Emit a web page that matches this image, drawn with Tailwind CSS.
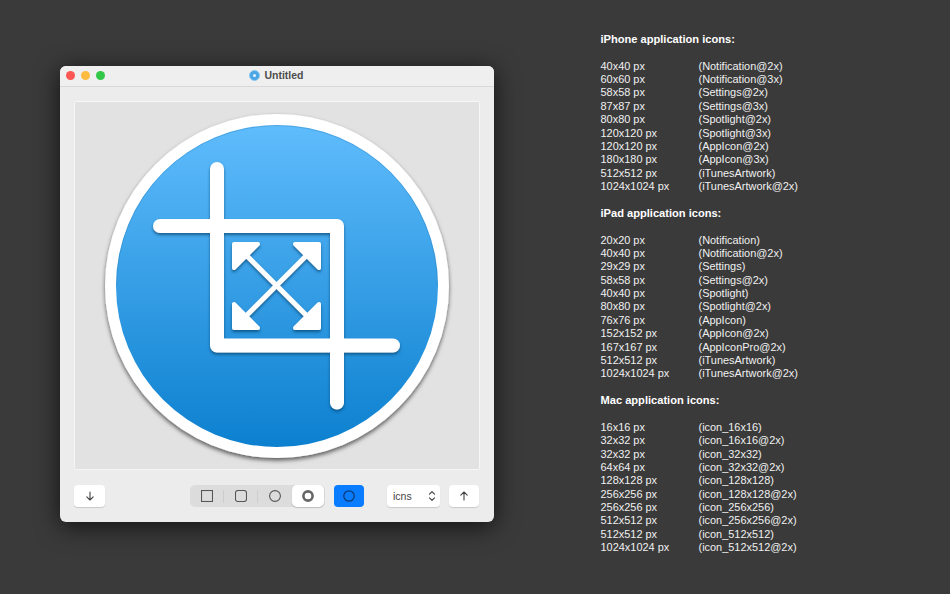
<!DOCTYPE html>
<html lang="en">
  <head>
    <meta charset="UTF-8" />
    <title>Icon sizes</title>
    <script src="https://cdn.jsdelivr.net/npm/@tailwindcss/browser@4"></script>
  </head>
  <body class="w-[950px] h-[594px] overflow-hidden bg-[#3a3a3a] font-['Liberation_Sans',sans-serif]">
    <div class="flex items-start h-full">
      <!-- Window -->
      <div class="ml-[60px] mt-[66px] w-[434px] h-[456px] shrink-0 flex flex-col rounded-[6px] bg-[#ececec] shadow-[0_4px_24px_rgba(0,0,0,0.7)]">
        <!-- Title bar -->
        <div class="relative h-[21px] pb-[1px] shrink-0 flex items-center justify-center rounded-t-[6px] bg-[#efefef] border-b border-[#d9d9d9]">
          <div class="absolute left-[6px] top-[5px] flex gap-[6px]">
            <span class="w-[9px] h-[9px] rounded-full bg-[#fc5753]"></span>
            <span class="w-[9px] h-[9px] rounded-full bg-[#fdbc40]"></span>
            <span class="w-[9px] h-[9px] rounded-full bg-[#33c748]"></span>
          </div>
          <div class="flex items-center gap-[4px] ml-[-1px]">
            <span class="w-[11px] h-[11px] rounded-full bg-[#4ba6e6] border-[1px] border-[#8cc6ee] flex items-center justify-center">
              <span class="w-[3px] h-[3px] rounded-full bg-[#e8f4fc]"></span>
            </span>
            <span class="text-[10.5px] font-bold leading-none text-[#4d4d4d]">Untitled</span>
          </div>
        </div>

        <!-- Icon well -->
        <div class="mt-[14px] mx-[14px] h-[369px] shrink-0 rounded-[2px] bg-[#e2e2e2] border border-[#f6f6f6]">
          <svg class="block -m-px" width="406" height="369" viewBox="74 101 406 369">
            <defs>
              <linearGradient id="disc" x1="0" y1="0" x2="0" y2="1">
                <stop offset="0" stop-color="#5fbcfc" />
                <stop offset="1" stop-color="#0c80cf" />
              </linearGradient>
              <filter id="outer" x="-10%" y="-10%" width="120%" height="120%">
                <feDropShadow dx="0" dy="2.5" stdDeviation="2.2" flood-color="#000" flood-opacity="0.6" />
              </filter>
              <filter id="mark" x="-10%" y="-10%" width="120%" height="120%">
                <feDropShadow dx="0" dy="2" stdDeviation="1.8" flood-color="#06375f" flood-opacity="0.65" />
              </filter>
            </defs>
            <circle cx="277" cy="286" r="172" fill="#fff" filter="url(#outer)" />
            <circle cx="277" cy="286" r="161" fill="url(#disc)" />
            <path d="M116.5 286A160.5 160.5 0 0 1 437.5 286" fill="none" stroke="#1d6fa8" stroke-opacity="0.3" stroke-width="1" />
            <g filter="url(#mark)" fill="#fff">
              <g fill="none" stroke="#fff" stroke-width="14" stroke-linecap="round" stroke-linejoin="round">
                <path d="M217 169V345.5H393" />
                <path d="M160 226H337V402.5" />
              </g>
              <g fill="none" stroke="#fff" stroke-width="5">
                <path d="M240 249L313 322" />
                <path d="M313 249L240 322" />
              </g>
              <g stroke="#fff" stroke-width="4" stroke-linejoin="round">
                <path d="M234 244H258L234 268Z" />
                <path d="M319 244H295L319 268Z" />
                <path d="M234 328H258L234 304Z" />
                <path d="M319 328H295L319 304Z" />
              </g>
            </g>
          </svg>
        </div>

        <!-- Toolbar -->
        <div class="mt-[15px] mx-[14px] flex items-center">
          <button class="w-[31px] h-[22px] rounded-[4px] bg-white shadow-[0_1px_1px_rgba(0,0,0,0.15)] flex items-center justify-center">
            <svg width="10" height="10" viewBox="0 0 10 10" fill="none" stroke="#444" stroke-width="1.1" stroke-linecap="round" stroke-linejoin="round"><path d="M5 1V9M1.8 5.8L5 9L8.2 5.8" /></svg>
          </button>

          <div class="ml-[85px] w-[135px] h-[22px] rounded-[5px] bg-[#dcdcdc] flex items-center">
            <div class="w-[33px] flex justify-center">
              <svg width="12" height="12" viewBox="0 0 12 12" fill="none" stroke="#555" stroke-width="1.1"><rect x="0.5" y="0.5" width="11" height="11" /></svg>
            </div>
            <span class="w-px h-[13px] bg-[#cdcdcd]"></span>
            <div class="w-[33px] flex justify-center">
              <svg width="12" height="12" viewBox="0 0 12 12" fill="none" stroke="#555" stroke-width="1.1"><rect x="0.5" y="0.5" width="11" height="11" rx="2.5" /></svg>
            </div>
            <span class="w-px h-[13px] bg-[#cdcdcd]"></span>
            <div class="w-[33px] flex justify-center">
              <svg width="12" height="12" viewBox="0 0 12 12" fill="none" stroke="#555" stroke-width="1.1"><circle cx="6" cy="6" r="5.4" /></svg>
            </div>
            <div class="w-[32px] h-[22px] ml-px rounded-[5px] bg-white shadow-[0_1px_1px_rgba(0,0,0,0.2)] flex items-center justify-center">
              <svg width="12" height="12" viewBox="0 0 12 12" fill="none" stroke="#666" stroke-width="2.6"><circle cx="6" cy="6" r="4.6" /></svg>
            </div>
          </div>

          <button class="ml-[9px] w-[30px] h-[22px] rounded-[4px] bg-[#0a7cff] flex items-center justify-center">
            <svg width="12" height="12" viewBox="0 0 12 12" fill="none" stroke="#0b3a78" stroke-width="1.3"><circle cx="6" cy="6" r="5.2" /></svg>
          </button>

          <div class="ml-[23px] w-[53px] h-[22px] pl-[6px] pr-[4px] rounded-[4px] bg-white shadow-[0_1px_1px_rgba(0,0,0,0.15)] flex items-center justify-between">
            <span class="text-[10.5px] leading-none text-[#444]">icns</span>
            <svg width="8" height="12" viewBox="0 0 8 12" fill="none" stroke="#444" stroke-width="1.2" stroke-linecap="round" stroke-linejoin="round"><path d="M1.5 4.2L4 1.7L6.5 4.2M1.5 7.8L4 10.3L6.5 7.8" /></svg>
          </div>

          <button class="ml-[9px] w-[30px] h-[22px] rounded-[4px] bg-white shadow-[0_1px_1px_rgba(0,0,0,0.15)] flex items-center justify-center">
            <svg width="10" height="10" viewBox="0 0 10 10" fill="none" stroke="#444" stroke-width="1.1" stroke-linecap="round" stroke-linejoin="round"><path d="M5 9V1M1.8 4.2L5 1L8.2 4.2" /></svg>
          </button>
        </div>
      </div>

      <!-- Size list -->
      <div class="ml-[106.5px] mt-[33px] w-[230px] text-[10.95px] leading-[13.37px] text-[#f0f0f0]">
        <h2 class="text-[11.1px] font-bold text-white">iPhone application icons:</h2>
        <dl class="mt-[13.37px] mb-[13.37px] grid grid-cols-[98px_1fr]">
          <dt>40x40 px</dt><dd>(Notification@2x)</dd>
          <dt>60x60 px</dt><dd>(Notification@3x)</dd>
          <dt>58x58 px</dt><dd>(Settings@2x)</dd>
          <dt>87x87 px</dt><dd>(Settings@3x)</dd>
          <dt>80x80 px</dt><dd>(Spotlight@2x)</dd>
          <dt>120x120 px</dt><dd>(Spotlight@3x)</dd>
          <dt>120x120 px</dt><dd>(AppIcon@2x)</dd>
          <dt>180x180 px</dt><dd>(AppIcon@3x)</dd>
          <dt>512x512 px</dt><dd>(iTunesArtwork)</dd>
          <dt>1024x1024 px</dt><dd>(iTunesArtwork@2x)</dd>
        </dl>
        <h2 class="text-[11.1px] font-bold text-white">iPad application icons:</h2>
        <dl class="mt-[13.37px] mb-[13.37px] grid grid-cols-[98px_1fr]">
          <dt>20x20 px</dt><dd>(Notification)</dd>
          <dt>40x40 px</dt><dd>(Notification@2x)</dd>
          <dt>29x29 px</dt><dd>(Settings)</dd>
          <dt>58x58 px</dt><dd>(Settings@2x)</dd>
          <dt>40x40 px</dt><dd>(Spotlight)</dd>
          <dt>80x80 px</dt><dd>(Spotlight@2x)</dd>
          <dt>76x76 px</dt><dd>(AppIcon)</dd>
          <dt>152x152 px</dt><dd>(AppIcon@2x)</dd>
          <dt>167x167 px</dt><dd>(AppIconPro@2x)</dd>
          <dt>512x512 px</dt><dd>(iTunesArtwork)</dd>
          <dt>1024x1024 px</dt><dd>(iTunesArtwork@2x)</dd>
        </dl>
        <h2 class="text-[11.1px] font-bold text-white">Mac application icons:</h2>
        <dl class="mt-[13.37px] grid grid-cols-[98px_1fr]">
          <dt>16x16 px</dt><dd>(icon_16x16)</dd>
          <dt>32x32 px</dt><dd>(icon_16x16@2x)</dd>
          <dt>32x32 px</dt><dd>(icon_32x32)</dd>
          <dt>64x64 px</dt><dd>(icon_32x32@2x)</dd>
          <dt>128x128 px</dt><dd>(icon_128x128)</dd>
          <dt>256x256 px</dt><dd>(icon_128x128@2x)</dd>
          <dt>256x256 px</dt><dd>(icon_256x256)</dd>
          <dt>512x512 px</dt><dd>(icon_256x256@2x)</dd>
          <dt>512x512 px</dt><dd>(icon_512x512)</dd>
          <dt>1024x1024 px</dt><dd>(icon_512x512@2x)</dd>
        </dl>
      </div>
    </div>
  </body>
</html>
